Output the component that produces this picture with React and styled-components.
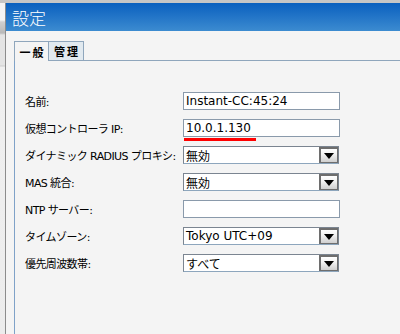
import React from "react";
import styled, { createGlobalStyle } from "styled-components";

const GlobalStyle = createGlobalStyle`
  html, body {
    margin: 0;
    padding: 0;
    width: 400px;
    height: 334px;
    overflow: hidden;
    background: #f4f4f4;
  }
  body {
    font-family: "DejaVu Sans", "Noto Sans CJK JP", sans-serif;
  }
`;

const Screen = styled.div`
  display: flex;
  flex-direction: column;
  width: 400px;
  height: 334px;
`;

const TopStrip = styled.div`
  height: 3px;
  background: #c6c6c6;
  flex: none;
`;

const Main = styled.div`
  display: flex;
  flex: 1;
  min-height: 0;
`;

const BackWindow = styled.div`
  width: 5px;
  flex: none;
  border-right: 1px solid #8c8c8c;
  background: linear-gradient(
    to bottom,
    #f4f4f4 0px,
    #f4f4f4 17px,
    #cfcfcf 19px,
    #b9b9b9 30px,
    #e4e4e4 32px,
    #e4e4e4 62px,
    #cdcdcd 63px,
    #f0f0f0 64px,
    #ececec 100%
  );
`;

const Dialog = styled.div`
  flex: 1;
  display: flex;
  flex-direction: column;
  background: #f4f4f4;
`;

const TitleBar = styled.div`
  height: 28px;
  flex: none;
  display: flex;
  align-items: center;
  padding-left: 6px;
  background: linear-gradient(to bottom, #0a60bf, #3c8bd0);
  color: #ffffff;
  font-family: "Noto Sans CJK JP", sans-serif;
  font-size: 17px;
  font-weight: 300;
`;

const Body = styled.div`
  flex: 1;
  display: flex;
  flex-direction: column;
  padding: 10px 0 0 8px;
`;

const TabRow = styled.div`
  display: flex;
  height: 19px;
  flex: none;
  border-bottom: 1px solid #8fa6bc;
`;

const Tab = styled.div`
  width: 35px;
  height: ${(p) => (p.$active ? "20px" : "19px")};
  box-sizing: border-box;
  display: flex;
  align-items: center;
  justify-content: center;
  border: 1px solid #8fa6bc;
  border-bottom: none;
  border-left: ${(p) => (p.$first ? "1px solid #8fa6bc" : "none")};
  background: ${(p) => (p.$active ? "#f4f4f4" : "#e1e9ef")};
  font-family: "Noto Sans CJK JP", sans-serif;
  font-size: 11px;
  font-weight: 700;
  color: #000;
  letter-spacing: 2px;
  padding-left: 2px;
  z-index: 1;
`;

const Panel = styled.div`
  flex: 1;
  border-left: 1px solid #7fa2c8;
  padding: 31px 0 0 10px;
  display: flex;
  flex-direction: column;
  gap: 9px;
`;

const Row = styled.div`
  display: flex;
  align-items: center;
  height: 18px;
  position: relative;
`;

const Label = styled.div`
  width: 158px;
  flex: none;
  font-family: "DejaVu Sans", "Noto Sans CJK JP", sans-serif;
  font-size: 11px;
  letter-spacing: -0.6px;
  color: #000;
  white-space: nowrap;
`;

const TextInput = styled.input`
  width: 157px;
  height: 18px;
  box-sizing: border-box;
  border: 1px solid #8a9aab;
  background: #ffffff;
  padding: 0 2px;
  margin: 0;
  font-family: "DejaVu Sans", "Noto Sans CJK JP", sans-serif;
  font-size: 12px;
  color: #000;
  outline: none;
`;

const Mark = styled.div`
  position: absolute;
  left: 159px;
  top: 19px;
  width: 72px;
  height: 3px;
  background: #ff0000;
`;

const SelectBox = styled.div`
  width: 156px;
  height: 18px;
  box-sizing: border-box;
  display: flex;
  align-items: stretch;
  border: 1px solid #7b8591;
  border-bottom-color: #8da6bd;
  background: #ffffff;
`;

const SelectValue = styled.div`
  flex: 1;
  display: flex;
  align-items: center;
  padding-left: 2px;
  font-size: 12px;
  color: #000;
  white-space: nowrap;
`;

const ArrowButton = styled.div`
  width: 19px;
  box-sizing: border-box;
  border: 1px solid #6e6e6e;
  border-top-width: 2px;
  border-left-width: 2px;
  background: linear-gradient(to bottom, #ffffff 0%, #f2f2f2 40%, #cfcfcf 100%);
  display: flex;
  align-items: center;
  justify-content: center;
`;

const Arrow = () => (
  <svg width="10" height="6" viewBox="0 0 10 6">
    <path d="M0 0 H10 L5 6 Z" fill="#000" />
  </svg>
);

const Select = ({ value }) => (
  <SelectBox>
    <SelectValue>{value}</SelectValue>
    <ArrowButton>
      <Arrow />
    </ArrowButton>
  </SelectBox>
);

const fields = [
  { label: "名前:", type: "input", value: "Instant-CC:45:24" },
  { label: "仮想コントローラ IP:", type: "input", value: "10.0.1.130", marked: true },
  { label: "ダイナミック RADIUS プロキシ:", type: "select", value: "無効" },
  { label: "MAS 統合:", type: "select", value: "無効" },
  { label: "NTP サーバー:", type: "input", value: "" },
  { label: "タイムゾーン:", type: "select", value: "Tokyo UTC+09" },
  { label: "優先周波数帯:", type: "select", value: "すべて" },
];

export default function App() {
  return (
    <>
      <GlobalStyle />
      <Screen>
        <TopStrip />
        <Main>
          <BackWindow />
          <Dialog>
            <TitleBar>設定</TitleBar>
            <Body>
              <TabRow>
                <Tab $active $first>一般</Tab>
                <Tab>管理</Tab>
              </TabRow>
              <Panel>
                {fields.map((f) => (
                  <Row key={f.label}>
                    <Label>{f.label}</Label>
                    {f.type === "input" ? (
                      <TextInput readOnly value={f.value} />
                    ) : (
                      <Select value={f.value} />
                    )}
                    {f.marked && <Mark />}
                  </Row>
                ))}
              </Panel>
            </Body>
          </Dialog>
        </Main>
      </Screen>
    </>
  );
}
